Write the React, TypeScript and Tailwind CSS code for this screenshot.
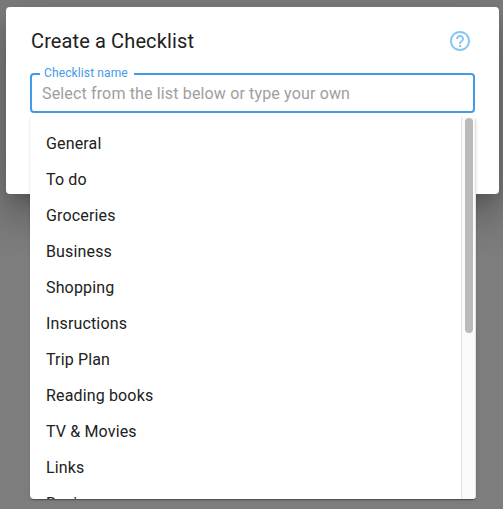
import React from 'react';

const items = ['General', 'To do', 'Groceries', 'Business', 'Shopping', 'Insructions', 'Trip Plan', 'Reading books', 'TV & Movies', 'Links', 'Recipes'];

export default function App() {
  return (
    <div className="relative h-[509px] w-[503px] overflow-hidden bg-[#7d7d7d] pl-1.5 pr-1 pt-[7px] font-[Roboto,sans-serif] text-[#212121]">
      <div className="h-[187px] rounded bg-white px-6 pt-5 shadow-[0_11px_15px_-7px_rgba(0,0,0,0.2),0_24px_38px_3px_rgba(0,0,0,0.14),0_9px_46px_8px_rgba(0,0,0,0.12)]">
        <div className="flex h-7 items-center justify-between pl-px">
          <h1 className="text-[20px] leading-7 tracking-[0.12px]">Create a Checklist</h1>
          <svg className="mr-[3px] h-6 w-6" viewBox="0 0 24 24" fill="#86c5f2">
            <path d="M11 18h2v-2h-2v2zm1-16C6.48 2 2 6.48 2 12s4.48 10 10 10 10-4.48 10-10S17.52 2 12 2zm0 18c-4.41 0-8-3.59-8-8s3.59-8 8-8 8 3.59 8 8-3.59 8-8 8zm0-14c-2.21 0-4 1.79-4 4h2c0-1.1.9-2 2-2s2 .9 2 2c0 2-3 1.75-3 5h2c0-2.25 3-2.5 3-5 0-2.21-1.79-4-4-4z" />
          </svg>
        </div>
        <label className="relative mt-[18px] flex h-10 w-[445px] items-center rounded border-2 border-[#429bea] pl-2.5 pt-0.5">
          <span className="absolute -top-[10px] left-2 bg-white pl-1 pr-1.5 text-[12px] leading-4 tracking-[0.12px] text-[#429bea]">Checklist name</span>
          <input className="w-full bg-transparent text-[16px] leading-6 tracking-[0.15px] outline-none placeholder:text-[#9e9e9e]" placeholder="Select from the list below or type your own" />
        </label>
      </div>
      <div className="absolute left-[30px] top-[117px] flex h-[382px] w-[446px] overflow-hidden rounded bg-white shadow-[0_2px_1px_-1px_rgba(0,0,0,0.2),0_1px_1px_rgba(0,0,0,0.14),0_1px_3px_rgba(0,0,0,0.12)]">
        <ul className="flex-1 pt-[9px]">
          {items.map((t) => (
            <li key={t} className="h-9 pl-4 text-[16px] leading-9 tracking-[0.15px]">{t}</li>
          ))}
        </ul>
        <div className="w-[15px] border-x border-[#e2e2e2] bg-[#fafafa] pl-[3px] pt-px">
          <div className="h-[215px] w-2 rounded-full bg-[#bababa]" />
        </div>
      </div>
    </div>
  );
}
